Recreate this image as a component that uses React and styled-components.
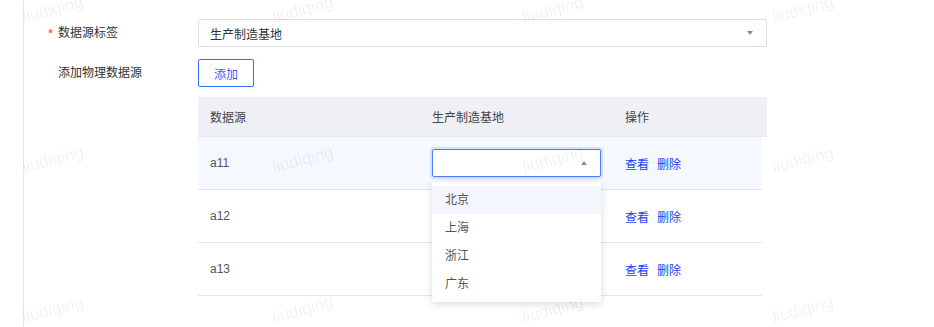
import React from "react";
import styled, { createGlobalStyle } from "styled-components";

const GlobalStyle = createGlobalStyle`
  html, body {
    margin: 0;
    padding: 0;
    background: #fff;
  }
  body {
    font-family: "Liberation Sans", "Noto Sans CJK SC", sans-serif;
    font-size: 12px;
    color: #333;
  }
`;

const Page = styled.div`
  position: relative;
  width: 934px;
  height: 327px;
  overflow: hidden;
  display: flex;
`;

const Gutter = styled.div`
  width: 23px;
  flex-shrink: 0;
  border-right: 1px solid #e8e8e8;
`;

const Form = styled.div`
  padding: 19px 0 0 34px;
  display: flex;
  flex-direction: column;
`;

const FormRow = styled.div`
  display: flex;
  align-items: ${(p) => (p.top ? "flex-start" : "center")};
  margin-bottom: ${(p) => p.gap || 0}px;
`;

const Label = styled.div`
  width: 140px;
  flex-shrink: 0;
  line-height: 28px;
  color: #333;
  position: relative;
  &::before {
    content: ${(p) => (p.required ? "'*'" : "none")};
    position: absolute;
    left: -10px;
    top: 1px;
    color: #f53f3f;
    font-size: 13px;
  }
`;

const Select = styled.div`
  box-sizing: border-box;
  width: ${(p) => p.width}px;
  height: 28px;
  border: 1px solid ${(p) => (p.focused ? "#4a7dff" : "#dcdfe6")};
  box-shadow: ${(p) => (p.focused ? "0 0 0 2px rgba(74,125,255,0.18)" : "none")};
  border-radius: 2px;
  background: #fff;
  display: flex;
  align-items: center;
  justify-content: space-between;
  padding: 0 13px 0 11px;
  color: #333;
`;

const Caret = styled.span`
  width: 0;
  height: 0;
  border-left: 3.5px solid transparent;
  border-right: 3.5px solid transparent;
  ${(p) =>
    p.up
      ? "border-bottom: 4px solid #8a8d95;"
      : "border-top: 4px solid #8a8d95;"}
`;

const OutlineButton = styled.button`
  box-sizing: border-box;
  height: 28px;
  width: 56px;
  border: 1px solid #3370ff;
  border-radius: 2px;
  background: #fff;
  color: #3c5bf6;
  font: inherit;
  padding: 0;
`;

const Table = styled.div`
  width: 569px;
`;

const HeadRow = styled.div`
  display: grid;
  grid-template-columns: 222px 193px 1fr;
  height: 39px;
  align-items: center;
  background: #eff0f5;
  border-bottom: 1px solid #e6e7ec;
  color: #444;
`;

const BodyRow = styled.div`
  display: grid;
  grid-template-columns: 222px 193px 1fr;
  height: 52px;
  margin-right: 5px;
  align-items: center;
  background: ${(p) => (p.active ? "#f5f8ff" : "#fff")};
  border-bottom: 1px solid #e5e6eb;
  color: #555;
`;

const Cell = styled.div`
  padding-left: 12px;
  position: relative;
  display: flex;
  align-items: center;
  gap: 8px;
`;

const LinkText = styled.a`
  color: #1b3ef2;
  cursor: pointer;
`;

const Menu = styled.div`
  position: absolute;
  top: 33px;
  left: 12px;
  width: 169px;
  box-sizing: border-box;
  padding: 4px 0;
  background: #fff;
  border-radius: 2px;
  box-shadow: 0 2px 8px rgba(0, 0, 0, 0.15);
  z-index: 5;
`;

const MenuItem = styled.div`
  height: 28px;
  line-height: 28px;
  padding-left: 13px;
  color: #555;
  background: ${(p) => (p.active ? "#f4f6fd" : "#fff")};
`;

const Watermarks = styled.div`
  position: absolute;
  top: -65px;
  left: -72px;
  display: grid;
  grid-template-columns: repeat(5, 250px);
  grid-auto-rows: 150px;
  pointer-events: none;
  z-index: 10;
`;

const Mark = styled.span`
  display: flex;
  align-items: center;
  justify-content: center;
  font-family: "Liberation Sans", sans-serif;
  font-size: 17px;
  color: rgba(0, 0, 0, 0.065);
  transform: rotate(-15deg);
`;

const rows = ["a11", "a12", "a13"];
const cities = ["北京", "上海", "浙江", "广东"];

export default function App() {
  return (
    <Page>
      <GlobalStyle />
      <Gutter />
      <Form>
        <FormRow gap={12}>
          <Label required>数据源标签</Label>
          <Select width={569}>
            <span>生产制造基地</span>
            <Caret />
          </Select>
        </FormRow>
        <FormRow gap={10}>
          <Label>添加物理数据源</Label>
          <OutlineButton>添加</OutlineButton>
        </FormRow>
        <FormRow top>
          <Label />
          <Table>
            <HeadRow>
              <Cell>数据源</Cell>
              <Cell>生产制造基地</Cell>
              <Cell>操作</Cell>
            </HeadRow>
            {rows.map((name, i) => (
              <BodyRow key={name} active={i === 0}>
                <Cell>{name}</Cell>
                <Cell>
                  {i === 0 && (
                    <>
                      <Select width={169} focused>
                        <span />
                        <Caret up />
                      </Select>
                      <Menu>
                        {cities.map((c, k) => (
                          <MenuItem key={c} active={k === 0}>
                            {c}
                          </MenuItem>
                        ))}
                      </Menu>
                    </>
                  )}
                </Cell>
                <Cell>
                  <LinkText>查看</LinkText>
                  <LinkText>删除</LinkText>
                </Cell>
              </BodyRow>
            ))}
          </Table>
        </FormRow>
      </Form>
      <Watermarks>
        {Array.from({ length: 20 }).map((_, i) => (
          <Mark key={i}>liudiqing</Mark>
        ))}
      </Watermarks>
    </Page>
  );
}
